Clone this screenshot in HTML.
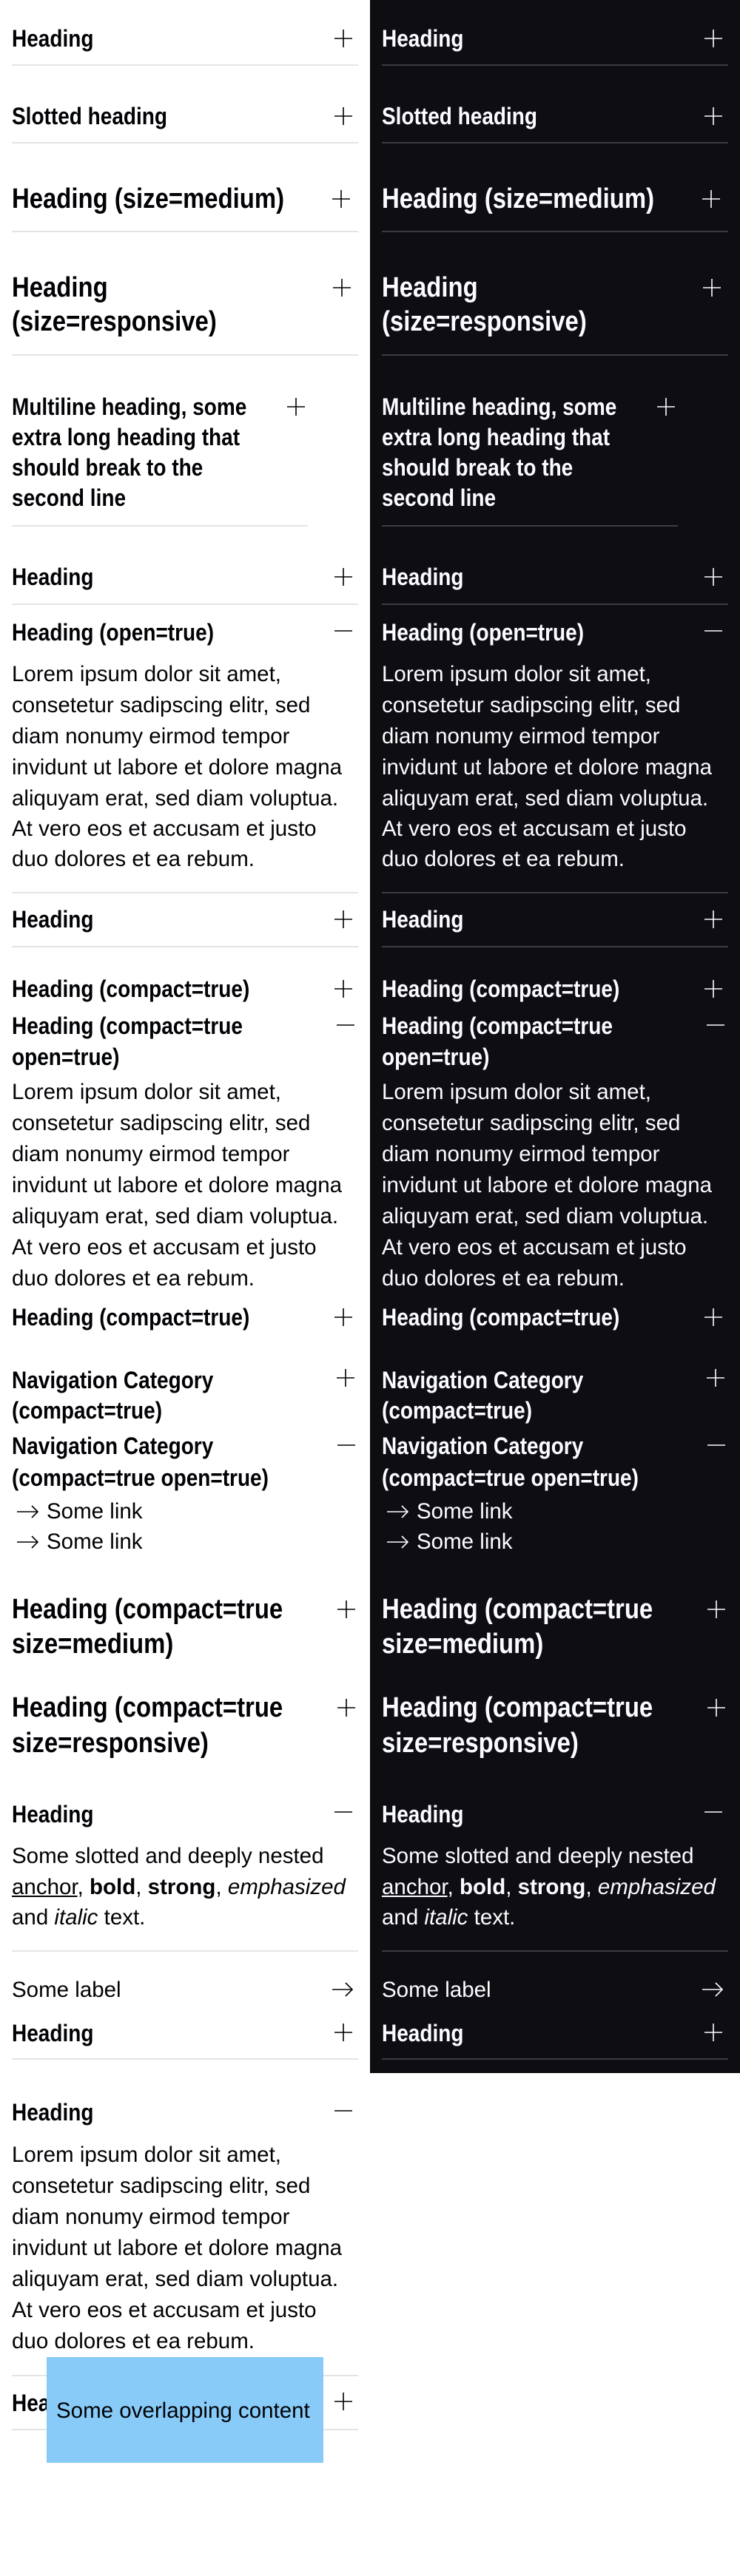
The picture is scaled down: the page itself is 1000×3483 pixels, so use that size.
<!DOCTYPE html>
<html><head><meta charset="utf-8">
<style>
*{margin:0;padding:0;box-sizing:border-box}
html,body{width:1000px;height:3483px;background:#fff;overflow:hidden;position:relative}
body{font-family:"Liberation Sans",sans-serif;color:#010205}
.col{position:absolute;top:0;width:500px}
.l{left:0;height:3483px}
.d{left:500px;height:2803px;background:#0e0e12;color:#fbfcff}
.t{position:absolute;left:16px;white-space:nowrap;transform-origin:0 50%}
.h{font-weight:bold;font-size:32px;line-height:40px;height:40px;transform:scaleX(.875)}
.m{font-weight:bold;font-size:38px;line-height:46px;height:46px;transform:scaleX(.865)}
.b{font-size:29.5px;line-height:42px;height:42px}
.hr{position:absolute;left:16px;width:468px;height:2px;background:#e3e4e5}
.d .hr{background:#3b3b42}
svg{position:absolute;overflow:visible}
.ic{stroke:#010205;stroke-width:1.6;fill:none}
.d .ic{stroke:#fbfcff}
.u{text-decoration:underline}
</style></head><body>

<div class="col l">
<div class="t h" style="top:32px">Heading</div>
<svg width="24" height="24" style="left:452px;top:40px"><path class="ic" d="M0 12H24M12 0V24"/></svg>
<div class="hr" style="top:87px"></div>

<div class="t h" style="top:137px">Slotted heading</div>
<svg width="24" height="24" style="left:452px;top:145px"><path class="ic" d="M0 12H24M12 0V24"/></svg>
<div class="hr" style="top:192px"></div>

<div class="t m" style="top:246px">Heading (size=medium)</div>
<svg width="24" height="24" style="left:449px;top:257px"><path class="ic" d="M0 12H24M12 0V24"/></svg>
<div class="hr" style="top:312px"></div>

<div class="t m" style="top:366px">Heading</div>
<div class="t m" style="top:412px">(size=responsive)</div>
<svg width="24" height="24" style="left:450px;top:377px"><path class="ic" d="M0 12H24M12 0V24"/></svg>
<div class="hr" style="top:479px"></div>

<div class="t h" style="top:530px">Multiline heading, some</div>
<div class="t h" style="top:571px">extra long heading that</div>
<div class="t h" style="top:612px">should break to the</div>
<div class="t h" style="top:653px">second line</div>
<svg width="24" height="24" style="left:388px;top:538px"><path class="ic" d="M0 12H24M12 0V24"/></svg>
<div class="hr" style="top:710px;width:400px"></div>

<div class="t h" style="top:760px">Heading</div>
<svg width="24" height="24" style="left:452px;top:768px"><path class="ic" d="M0 12H24M12 0V24"/></svg>
<div class="hr" style="top:816px"></div>

<div class="t h" style="top:835px">Heading (open=true)</div>
<svg width="24" height="24" style="left:452px;top:841px"><path class="ic" d="M0 12H24"/></svg>
<div class="t b" style="top:891px">Lorem ipsum dolor sit amet,</div>
<div class="t b" style="top:933px">consetetur sadipscing elitr, sed</div>
<div class="t b" style="top:975px">diam nonumy eirmod tempor</div>
<div class="t b" style="top:1017px">invidunt ut labore et dolore magna</div>
<div class="t b" style="top:1059px">aliquyam erat, sed diam voluptua.</div>
<div class="t b" style="top:1100px">At vero eos et accusam et justo</div>
<div class="t b" style="top:1141px">duo dolores et ea rebum.</div>
<div class="hr" style="top:1206px"></div>

<div class="t h" style="top:1223px">Heading</div>
<svg width="24" height="24" style="left:452px;top:1231px"><path class="ic" d="M0 12H24M12 0V24"/></svg>
<div class="hr" style="top:1279px"></div>

<div class="t h" style="top:1317px">Heading (compact=true)</div>
<svg width="24" height="24" style="left:452px;top:1325px"><path class="ic" d="M0 12H24M12 0V24"/></svg>

<div class="t h" style="top:1367px">Heading (compact=true</div>
<div class="t h" style="top:1409px">open=true)</div>
<svg width="24" height="24" style="left:455px;top:1374px"><path class="ic" d="M0 12H24"/></svg>
<div class="t b" style="top:1456px">Lorem ipsum dolor sit amet,</div>
<div class="t b" style="top:1498px">consetetur sadipscing elitr, sed</div>
<div class="t b" style="top:1540px">diam nonumy eirmod tempor</div>
<div class="t b" style="top:1582px">invidunt ut labore et dolore magna</div>
<div class="t b" style="top:1624px">aliquyam erat, sed diam voluptua.</div>
<div class="t b" style="top:1666px">At vero eos et accusam et justo</div>
<div class="t b" style="top:1708px">duo dolores et ea rebum.</div>

<div class="t h" style="top:1761px">Heading (compact=true)</div>
<svg width="24" height="24" style="left:452px;top:1769px"><path class="ic" d="M0 12H24M12 0V24"/></svg>

<div class="t h" style="top:1846px">Navigation Category</div>
<div class="t h" style="top:1887px">(compact=true)</div>
<svg width="24" height="24" style="left:455px;top:1851px"><path class="ic" d="M0 12H24M12 0V24"/></svg>

<div class="t h" style="top:1935px">Navigation Category</div>
<div class="t h" style="top:1978px">(compact=true open=true)</div>
<svg width="24" height="24" style="left:456px;top:1942px"><path class="ic" d="M0 12H24"/></svg>
<svg width="29" height="20" style="left:23px;top:2034px"><path class="ic" d="M0 10H28M20 2L28 10L20 18"/></svg>
<div class="t b" style="top:2023px;left:63px">Some link</div>
<svg width="29" height="20" style="left:23px;top:2075px"><path class="ic" d="M0 10H28M20 2L28 10L20 18"/></svg>
<div class="t b" style="top:2064px;left:63px">Some link</div>

<div class="t m" style="top:2153px">Heading (compact=true</div>
<div class="t m" style="top:2200px">size=medium)</div>
<svg width="24" height="24" style="left:456px;top:2164px"><path class="ic" d="M0 12H24M12 0V24"/></svg>

<div class="t m" style="top:2286px">Heading (compact=true</div>
<div class="t m" style="top:2334px">size=responsive)</div>
<svg width="24" height="24" style="left:456px;top:2297px"><path class="ic" d="M0 12H24M12 0V24"/></svg>

<div class="t h" style="top:2433px">Heading</div>
<svg width="24" height="24" style="left:452px;top:2438px"><path class="ic" d="M0 12H24"/></svg>
<div class="t b" style="top:2489px">Some slotted and deeply nested</div>
<div class="t b" style="top:2531px"><span class="u">anchor</span>, <b>bold</b>, <strong>strong</strong>, <em>emphasized</em></div>
<div class="t b" style="top:2572px">and <i>italic</i> text.</div>
<div class="hr" style="top:2637px"></div>

<div class="t b" style="top:2670px">Some label</div>
<svg width="28" height="24" style="left:449px;top:2678px"><path class="ic" d="M0 12H27M18 3L27 12L18 21"/></svg>
<div class="t h" style="top:2729px">Heading</div>
<svg width="24" height="24" style="left:452px;top:2736px"><path class="ic" d="M0 12H24M12 0V24"/></svg>
<div class="hr" style="top:2783px"></div>

<div class="t h" style="top:2836px">Heading</div>
<svg width="24" height="24" style="left:452px;top:2842px"><path class="ic" d="M0 12H24"/></svg>
<div class="t b" style="top:2893px">Lorem ipsum dolor sit amet,</div>
<div class="t b" style="top:2935px">consetetur sadipscing elitr, sed</div>
<div class="t b" style="top:2977px">diam nonumy eirmod tempor</div>
<div class="t b" style="top:3019px">invidunt ut labore et dolore magna</div>
<div class="t b" style="top:3061px">aliquyam erat, sed diam voluptua.</div>
<div class="t b" style="top:3103px">At vero eos et accusam et justo</div>
<div class="t b" style="top:3145px">duo dolores et ea rebum.</div>
<div class="hr" style="top:3211px"></div>
<div class="t h" style="top:3229px">Heading</div>
<svg width="24" height="24" style="left:452px;top:3235px"><path class="ic" d="M0 12H24M12 0V24"/></svg>
<div class="hr" style="top:3284px"></div>
<div style="position:absolute;left:63px;top:3187px;width:374px;height:143px;background:#88cbf8"></div>
<div class="t b" style="top:3239px;left:76px">Some overlapping content</div>
</div>

<div class="col d">
<div class="t h" style="top:32px">Heading</div>
<svg width="24" height="24" style="left:452px;top:40px"><path class="ic" d="M0 12H24M12 0V24"/></svg>
<div class="hr" style="top:87px"></div>

<div class="t h" style="top:137px">Slotted heading</div>
<svg width="24" height="24" style="left:452px;top:145px"><path class="ic" d="M0 12H24M12 0V24"/></svg>
<div class="hr" style="top:192px"></div>

<div class="t m" style="top:246px">Heading (size=medium)</div>
<svg width="24" height="24" style="left:449px;top:257px"><path class="ic" d="M0 12H24M12 0V24"/></svg>
<div class="hr" style="top:312px"></div>

<div class="t m" style="top:366px">Heading</div>
<div class="t m" style="top:412px">(size=responsive)</div>
<svg width="24" height="24" style="left:450px;top:377px"><path class="ic" d="M0 12H24M12 0V24"/></svg>
<div class="hr" style="top:479px"></div>

<div class="t h" style="top:530px">Multiline heading, some</div>
<div class="t h" style="top:571px">extra long heading that</div>
<div class="t h" style="top:612px">should break to the</div>
<div class="t h" style="top:653px">second line</div>
<svg width="24" height="24" style="left:388px;top:538px"><path class="ic" d="M0 12H24M12 0V24"/></svg>
<div class="hr" style="top:710px;width:400px"></div>

<div class="t h" style="top:760px">Heading</div>
<svg width="24" height="24" style="left:452px;top:768px"><path class="ic" d="M0 12H24M12 0V24"/></svg>
<div class="hr" style="top:816px"></div>

<div class="t h" style="top:835px">Heading (open=true)</div>
<svg width="24" height="24" style="left:452px;top:841px"><path class="ic" d="M0 12H24"/></svg>
<div class="t b" style="top:891px">Lorem ipsum dolor sit amet,</div>
<div class="t b" style="top:933px">consetetur sadipscing elitr, sed</div>
<div class="t b" style="top:975px">diam nonumy eirmod tempor</div>
<div class="t b" style="top:1017px">invidunt ut labore et dolore magna</div>
<div class="t b" style="top:1059px">aliquyam erat, sed diam voluptua.</div>
<div class="t b" style="top:1100px">At vero eos et accusam et justo</div>
<div class="t b" style="top:1141px">duo dolores et ea rebum.</div>
<div class="hr" style="top:1206px"></div>

<div class="t h" style="top:1223px">Heading</div>
<svg width="24" height="24" style="left:452px;top:1231px"><path class="ic" d="M0 12H24M12 0V24"/></svg>
<div class="hr" style="top:1279px"></div>

<div class="t h" style="top:1317px">Heading (compact=true)</div>
<svg width="24" height="24" style="left:452px;top:1325px"><path class="ic" d="M0 12H24M12 0V24"/></svg>

<div class="t h" style="top:1367px">Heading (compact=true</div>
<div class="t h" style="top:1409px">open=true)</div>
<svg width="24" height="24" style="left:455px;top:1374px"><path class="ic" d="M0 12H24"/></svg>
<div class="t b" style="top:1456px">Lorem ipsum dolor sit amet,</div>
<div class="t b" style="top:1498px">consetetur sadipscing elitr, sed</div>
<div class="t b" style="top:1540px">diam nonumy eirmod tempor</div>
<div class="t b" style="top:1582px">invidunt ut labore et dolore magna</div>
<div class="t b" style="top:1624px">aliquyam erat, sed diam voluptua.</div>
<div class="t b" style="top:1666px">At vero eos et accusam et justo</div>
<div class="t b" style="top:1708px">duo dolores et ea rebum.</div>

<div class="t h" style="top:1761px">Heading (compact=true)</div>
<svg width="24" height="24" style="left:452px;top:1769px"><path class="ic" d="M0 12H24M12 0V24"/></svg>

<div class="t h" style="top:1846px">Navigation Category</div>
<div class="t h" style="top:1887px">(compact=true)</div>
<svg width="24" height="24" style="left:455px;top:1851px"><path class="ic" d="M0 12H24M12 0V24"/></svg>

<div class="t h" style="top:1935px">Navigation Category</div>
<div class="t h" style="top:1978px">(compact=true open=true)</div>
<svg width="24" height="24" style="left:456px;top:1942px"><path class="ic" d="M0 12H24"/></svg>
<svg width="29" height="20" style="left:23px;top:2034px"><path class="ic" d="M0 10H28M20 2L28 10L20 18"/></svg>
<div class="t b" style="top:2023px;left:63px">Some link</div>
<svg width="29" height="20" style="left:23px;top:2075px"><path class="ic" d="M0 10H28M20 2L28 10L20 18"/></svg>
<div class="t b" style="top:2064px;left:63px">Some link</div>

<div class="t m" style="top:2153px">Heading (compact=true</div>
<div class="t m" style="top:2200px">size=medium)</div>
<svg width="24" height="24" style="left:456px;top:2164px"><path class="ic" d="M0 12H24M12 0V24"/></svg>

<div class="t m" style="top:2286px">Heading (compact=true</div>
<div class="t m" style="top:2334px">size=responsive)</div>
<svg width="24" height="24" style="left:456px;top:2297px"><path class="ic" d="M0 12H24M12 0V24"/></svg>

<div class="t h" style="top:2433px">Heading</div>
<svg width="24" height="24" style="left:452px;top:2438px"><path class="ic" d="M0 12H24"/></svg>
<div class="t b" style="top:2489px">Some slotted and deeply nested</div>
<div class="t b" style="top:2531px"><span class="u">anchor</span>, <b>bold</b>, <strong>strong</strong>, <em>emphasized</em></div>
<div class="t b" style="top:2572px">and <i>italic</i> text.</div>
<div class="hr" style="top:2637px"></div>

<div class="t b" style="top:2670px">Some label</div>
<svg width="28" height="24" style="left:449px;top:2678px"><path class="ic" d="M0 12H27M18 3L27 12L18 21"/></svg>
<div class="t h" style="top:2729px">Heading</div>
<svg width="24" height="24" style="left:452px;top:2736px"><path class="ic" d="M0 12H24M12 0V24"/></svg>
<div class="hr" style="top:2783px"></div>
</div>

</body></html>
